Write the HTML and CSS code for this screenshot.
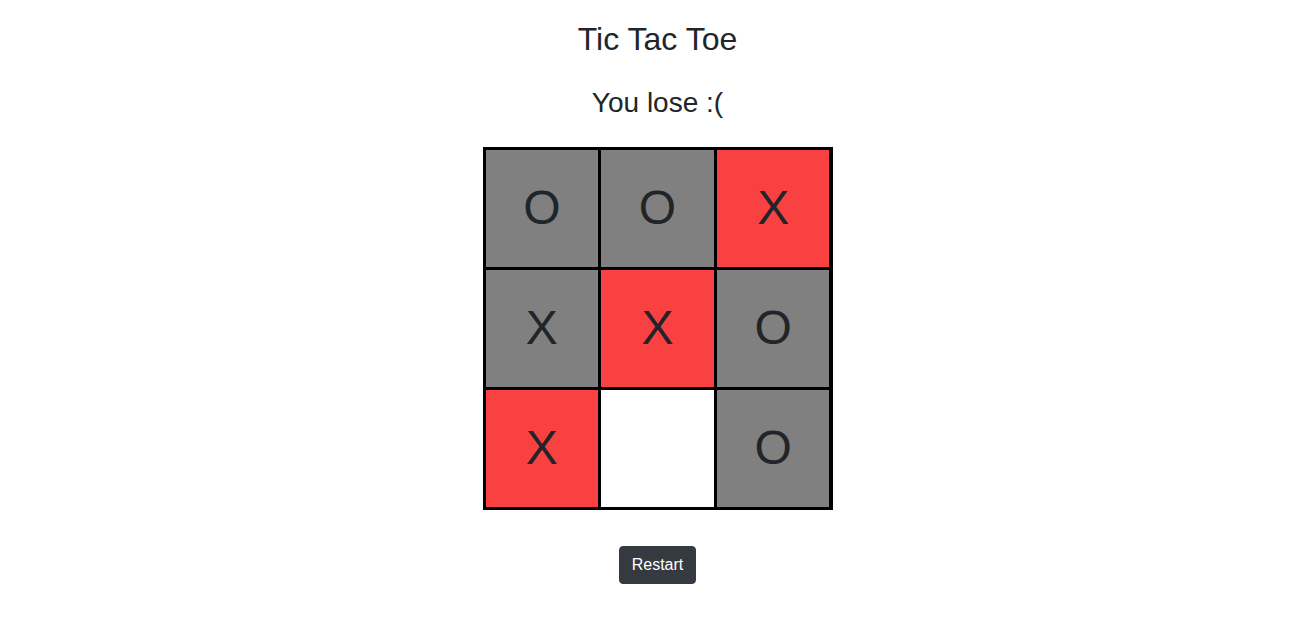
FILE: index.html
```html
<!DOCTYPE html>
<html lang="en">
<head>
<meta charset="utf-8">
<title>Tic Tac Toe</title>
<link rel="stylesheet" href="styles.css">
</head>
<body>
<main class="game">
  <h1 class="title">Tic Tac Toe</h1>
  <h2 class="status">You lose :(</h2>
  <div class="board">
    <div class="cell cell-o">O</div>
    <div class="cell cell-o">O</div>
    <div class="cell cell-win">X</div>
    <div class="cell cell-o">X</div>
    <div class="cell cell-win">X</div>
    <div class="cell cell-o">O</div>
    <div class="cell cell-win">X</div>
    <div class="cell cell-empty"></div>
    <div class="cell cell-o">O</div>
  </div>
  <button class="restart" type="button">Restart</button>
</main>
</body>
</html>
```
FILE: styles.css
```css
html, body {
  margin: 0;
  padding: 0;
  background: #ffffff;
}

body {
  font-family: "Liberation Sans", Arial, Helvetica, sans-serif;
  color: #212529;
}

.game {
  display: flex;
  flex-direction: column;
  align-items: center;
  padding-left: 15px;
}

.title {
  margin: 20px 0 0;
  font-size: 32px;
  font-weight: 400;
  line-height: 1.2;
}

.status {
  margin: 28px 0 0;
  font-size: 28px;
  font-weight: 400;
  line-height: 1.2;
}

.board {
  margin-top: 27px;
  width: 350px;
  box-sizing: border-box;
  display: grid;
  grid-template-columns: repeat(3, 1fr);
  grid-auto-rows: 117px;
  gap: 3px;
  border: 3px solid #000000;
  background: #000000;
}

.cell {
  display: flex;
  align-items: center;
  justify-content: center;
  font-size: 48px;
  line-height: 1;
  color: #212529;
}

.cell-o {
  background: #808080;
}

.cell-win {
  background: #fa4141;
}

.cell-empty {
  background: #ffffff;
}

.restart {
  margin-top: 36px;
  font-family: "Liberation Sans", Arial, Helvetica, sans-serif;
  font-size: 16px;
  line-height: 1.5;
  padding: 6px 12px;
  color: #ffffff;
  background: #343a40;
  border: 1px solid #343a40;
  border-radius: 4px;
  cursor: pointer;
}
```
